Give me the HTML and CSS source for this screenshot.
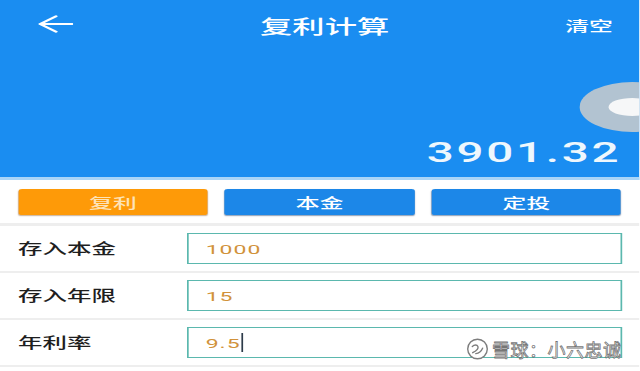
FILE: index.html
```html
<!DOCTYPE html>
<html lang="zh-CN">
<head>
<meta charset="utf-8">
<title>复利计算</title>
<link rel="stylesheet" href="styles.css">
</head>
<body>
<div class="screen">
  <header class="header">
    <div class="nav">
      <span class="back">
        <svg width="21" height="18" viewBox="0 0 21 18"><path d="M20.5 9H1.5M11 1.2L1.6 9L11 16.8" fill="none" stroke="#fff" stroke-width="1.8" stroke-linecap="round" stroke-linejoin="round"/></svg>
      </span>
      <h1 class="title">复利计算</h1>
      <span class="clear">清空</span>
    </div>
    <div class="knob"><span class="knob-dot"></span></div>
    <div class="result">3901.32</div>
  </header>
  <div class="tabs">
    <button class="tab tab-active">复利</button>
    <button class="tab">本金</button>
    <button class="tab">定投</button>
  </div>
  <div class="form">
    <div class="row">
      <span class="label">存入本金</span>
      <div class="field">1000</div>
    </div>
    <div class="row">
      <span class="label">存入年限</span>
      <div class="field">15</div>
    </div>
    <div class="row">
      <span class="label">年利率</span>
      <div class="field">9.5<span class="caret"></span></div>
    </div>
  </div>
</div>
<div class="watermark">
  <svg class="wm-logo" width="23" height="22" viewBox="0 0 23 22"><circle cx="11.5" cy="11" r="9.8" fill="#fff" stroke="#7d7d7d" stroke-width="1.4"/><path d="M6.3 8.4c2-1.9 4.8-1.9 5.6 0s-2.1 4.6-5.2 6.3M9.8 15.6c2.6-.3 5.2-1.7 6.8-5.4" fill="none" stroke="#7d7d7d" stroke-width="1.4" stroke-linecap="round"/></svg>
  <span class="wm-text">雪球：小六忠诚</span>
</div>
</body>
</html>
```
FILE: styles.css
```css
html, body {
  margin: 0;
  padding: 0;
  background: #ffffff;
  overflow: hidden;
}
body {
  width: 640px;
  height: 371px;
  position: relative;
  font-family: "Noto Sans CJK SC", "Noto Sans", sans-serif;
}
.screen {
  width: 376.47px;
  transform: scaleX(1.7);
  transform-origin: 0 0;
}
.header {
  position: relative;
  height: 177px;
  background: #1a8df1;
  border-bottom: 3px solid #a9d5f8;
  display: flex;
  flex-direction: column;
  justify-content: space-between;
  overflow: hidden;
}
.nav {
  height: 48px;
  display: grid;
  grid-template-columns: 1fr auto 1fr;
  align-items: center;
  padding: 0 16px 0 21.5px;
}
.back {
  display: flex;
  align-items: center;
}
.title {
  margin: 0;
  font-size: 19px;
  font-weight: 500;
  color: #ffffff;
  line-height: 1;
  padding-top: 2px;
}
.clear {
  justify-self: end;
  font-size: 14px;
  font-weight: 500;
  color: #ffffff;
  line-height: 1;
  padding-top: 2px;
}
.knob {
  position: absolute;
  left: 340.6px;
  top: 82px;
  width: 62.8px;
  height: 50px;
  border-radius: 50%;
  background: #b2c3d1;
  display: flex;
  align-items: center;
  justify-content: center;
}
.knob-dot {
  width: 28.8px;
  height: 18px;
  border-radius: 50%;
  background: #f6f7f8;
}
.result {
  font-family: Roboto, "Liberation Sans", sans-serif;
  font-size: 28px;
  font-weight: 500;
  line-height: 28px;
  letter-spacing: 1.6px;
  color: #eef7fd;
  text-align: right;
  padding: 0 11px 10px 0;
}
.tabs {
  display: flex;
  gap: 10px;
  padding: 9px 11px 8px 10.6px;
  border-bottom: 3px solid #eeeeee;
}
.tab {
  flex: 1;
  height: 26px;
  border: 0;
  border-radius: 2px;
  background: #1c87e8;
  box-shadow: 0 1px 1px rgba(0, 40, 90, 0.45);
  color: #ffffff;
  font-family: "Noto Sans CJK SC", sans-serif;
  font-size: 14px;
  font-weight: 500;
  line-height: 1;
  padding: 0;
}
.tab-active {
  background: #fe9a08;
  color: #fde3b8;
  box-shadow: 0 1px 1px rgba(120, 60, 0, 0.4);
}
.row {
  height: 45px;
  display: flex;
  align-items: center;
  padding: 0 10.6px;
  border-bottom: 2px solid #eeeeee;
}
.label {
  width: 99.4px;
  font-size: 14.4px;
  font-weight: 500;
  color: #1e1e1e;
  line-height: 1;
}
.field {
  flex: 1;
  height: 31px;
  box-sizing: border-box;
  border-style: solid;
  border-color: #5bb8ae;
  border-width: 1.5px 1.2px;
  background: #ffffff;
  display: flex;
  align-items: center;
  padding-left: 10px;
  font-family: Roboto, "Liberation Sans", sans-serif;
  font-size: 13.5px;
  font-weight: 400;
  letter-spacing: 0.6px;
  color: #d1923a;
}
.caret {
  display: inline-block;
  width: 0;
  height: 19px;
  border-left: 1px solid #2d3b4a;
  margin-left: 0.5px;
}
.watermark {
  position: absolute;
  left: 466px;
  top: 338px;
  display: flex;
  align-items: center;
  gap: 3px;
}
.wm-text {
  font-size: 18px;
  line-height: 1;
  color: #ffffff;
  -webkit-text-stroke: 0.8px rgba(80, 80, 80, 0.8);
  letter-spacing: 0.5px;
}
```
